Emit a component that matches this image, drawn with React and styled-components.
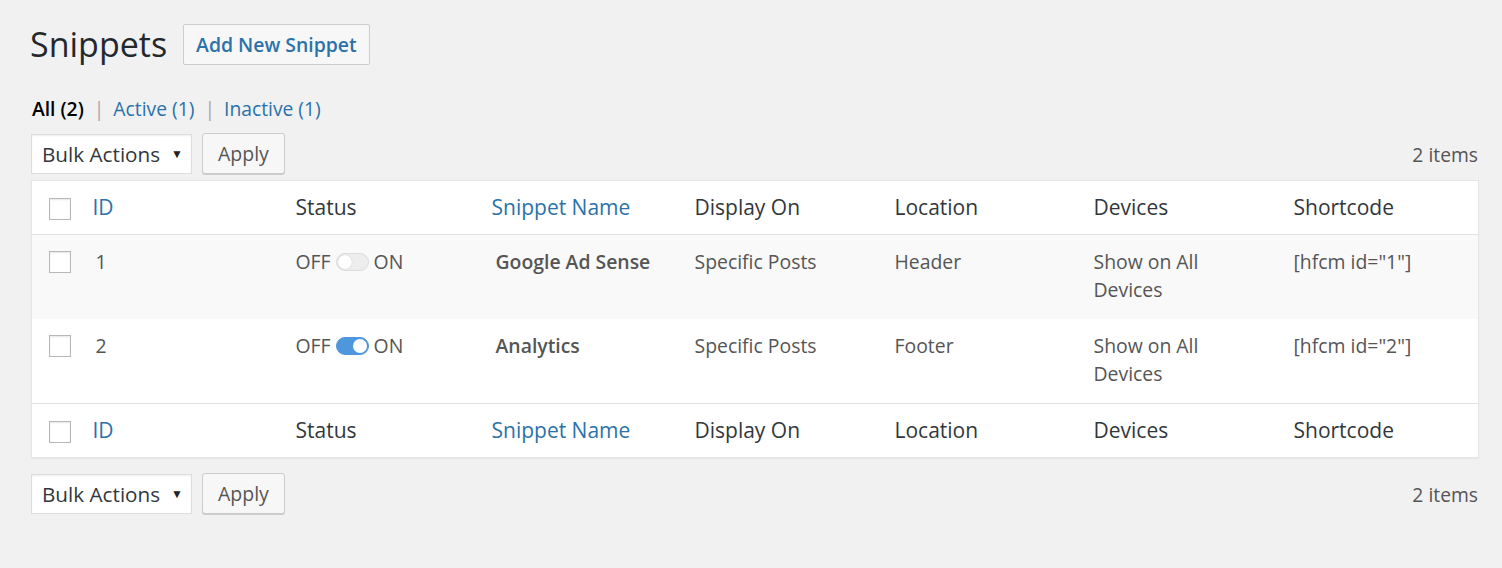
import React from 'react'
import styled, { createGlobalStyle } from 'styled-components'

const GlobalStyle = createGlobalStyle`
  html, body {
    margin: 0;
    padding: 0;
    background: #f1f1f1;
    font-family: "Open Sans", "Noto Sans", "Liberation Sans", sans-serif;
    color: #555;
  }
  * { box-sizing: border-box; }
`;

const snippets = [
  { id: 1, active: false, name: 'Google Ad Sense', display: 'Specific Posts', location: 'Header', devices: 'Show on All Devices', shortcode: '[hfcm id="1"]' },
  { id: 2, active: true, name: 'Analytics', display: 'Specific Posts', location: 'Footer', devices: 'Show on All Devices', shortcode: '[hfcm id="2"]' },
];

const columns = [
  { key: 'id', label: 'ID', link: true, width: 203 },
  { key: 'status', label: 'Status', width: 196 },
  { key: 'name', label: 'Snippet Name', link: true, width: 203 },
  { key: 'display', label: 'Display On', width: 200 },
  { key: 'location', label: 'Location', width: 199 },
  { key: 'devices', label: 'Devices', width: 200 },
  { key: 'shortcode', label: 'Shortcode', width: 199 },
];

const BulkBar = ({ top }) => (
  <TableNav top={top}>
    <SelectWrap>
      <Select defaultValue="-1">
        <option value="-1">Bulk Actions</option>
        <option value="delete">Delete</option>
      </Select>
      <Arrow>▼</Arrow>
    </SelectWrap>
    <Button>Apply</Button>
    <Count>2 items</Count>
  </TableNav>
);

const HeadRow = () => (
  <tr>
    <CheckHead>
      <Checkbox type="checkbox" />
    </CheckHead>
    {columns.map((c) => (
      <Th key={c.key}>{c.link ? <HeadLink href="#">{c.label}</HeadLink> : c.label}</Th>
    ))}
  </tr>
);

const App = () => {
  document.title = 'Snippets';
  return (
    <Wrap>
      <GlobalStyle />
      <TitleRow>
        <Title>Snippets</Title>
        <AddButton href="#">Add New Snippet</AddButton>
      </TitleRow>
      <Filters>
        <li><Current>All (2)</Current><Sep>|</Sep></li>
        <li><FilterLink href="#">Active (1)</FilterLink><Sep>|</Sep></li>
        <li><FilterLink href="#">Inactive (1)</FilterLink></li>
      </Filters>
      <BulkBar top />
      <Table>
        <colgroup>
          <col style={{ width: 47 }} />
          {columns.map((c) => (
            <col key={c.key} style={{ width: c.width }} />
          ))}
        </colgroup>
        <thead>
          <HeadRow />
        </thead>
        <tbody>
          {snippets.map((s, i) => (
            <Row key={s.id} alt={i % 2 === 0}>
              <CheckCell>
                <Checkbox type="checkbox" />
              </CheckCell>
              <Td><IdText>{s.id}</IdText></Td>
              <Td>
                <Toggle>
                  OFF
                  <Switch on={s.active}><Knob on={s.active} /></Switch>
                  ON
                </Toggle>
              </Td>
              <Td><Name>{s.name}</Name></Td>
              <Td>{s.display}</Td>
              <Td>{s.location}</Td>
              <Td>{s.devices}</Td>
              <Td>{s.shortcode}</Td>
            </Row>
          ))}
        </tbody>
        <Foot>
          <HeadRow />
        </Foot>
      </Table>
      <BulkBar />
    </Wrap>
  )
}

const Wrap = styled.div`
  padding: 24px 24px 40px 31px;
`;

const TitleRow = styled.div`
  display: flex;
  align-items: center;
  height: 41px;
`;

const Title = styled.h1`
  margin: 0 16px 0 -1px;
  font-size: 34px;
  font-weight: 400;
  line-height: 41px;
  color: #23282d;
`;

const AddButton = styled.a`
  display: inline-flex;
  align-items: center;
  height: 41px;
  padding: 0 12px;
  border: 1px solid #ccc;
  border-radius: 2px;
  background: #f7f7f7;
  color: #2b72aa;
  font-size: 19.4px;
  font-weight: 600;
  text-decoration: none;
`;

const Filters = styled.ul`
  display: flex;
  list-style: none;
  margin: 30px 0 0 1px;
  padding: 0;
  font-size: 19.3px;
  line-height: 28px;
  color: #666;
`;

const Current = styled.span`
  color: #000;
  font-weight: 600;
`;

const FilterLink = styled.a`
  color: #2b72aa;
  text-decoration: none;
`;

const Sep = styled.span`
  color: #a8a8a8;
  margin: 0 9px 0 10px;
`;

const TableNav = styled.div`
  display: flex;
  align-items: center;
  height: 42px;
  margin: ${(p) => (p.top ? '10px 0 5px 0' : '15px 0 0 0')};
`;

const SelectWrap = styled.div`
  position: relative;
  width: 161px;
  height: 40px;
  margin-right: 10px;
`;

const Select = styled.select`
  appearance: none;
  width: 100%;
  height: 100%;
  padding: 0 10px;
  border: 1px solid #ddd;
  border-radius: 0;
  background: #fff;
  box-shadow: inset 0 1px 2px rgba(0, 0, 0, 0.07);
  font-family: inherit;
  font-size: 20.7px;
  color: #32373c;
`;

const Arrow = styled.span`
  position: absolute;
  right: 9px;
  top: 11px;
  font-size: 12px;
  color: #222;
  pointer-events: none;
`;

const Button = styled.button`
  height: 41px;
  padding: 0 15px;
  border: 1px solid #ccc;
  border-radius: 3px;
  background: #f7f7f7;
  box-shadow: 0 1px 0 #ccc;
  font-family: inherit;
  font-size: 19.5px;
  color: #555;
  margin-bottom: 1px;
`;

const Count = styled.span`
  margin-left: auto;
  font-size: 19.3px;
  color: #555;
`;

const Table = styled.table`
  width: 100%;
  table-layout: fixed;
  border-collapse: collapse;
  background: #fff;
  border: 1px solid #e5e5e5;
  box-shadow: 0 1px 1px rgba(0, 0, 0, 0.04);
  thead tr { border-bottom: 1px solid #e1e1e1; }
`;

const Foot = styled.tfoot`
  tr { border-top: 1px solid #e1e1e1; }
`;

const Th = styled.th`
  text-align: left;
  font-weight: 400;
  font-size: 21px;
  line-height: 28px;
  color: #32373c;
  padding: 12px 14px 13px;
`;

const HeadLink = styled.a`
  color: #2b72aa;
  text-decoration: none;
`;

const CheckHead = styled.th`
  padding: 12px 0 9px 17px;
  text-align: left;
  vertical-align: middle;
`;

const CheckCell = styled.td`
  padding: 16px 0 0 17px;
  vertical-align: top;
`;

const Checkbox = styled.input`
  appearance: none;
  display: block;
  margin: 0;
  width: 22px;
  height: 22px;
  border: 1px solid #b4b9be;
  background: #fff;
  box-shadow: inset 0 1px 2px rgba(0, 0, 0, 0.1);
`;

const Row = styled.tr`
  background: ${(p) => (p.alt ? '#f9f9f9' : '#fff')};
`;

const Td = styled.td`
  vertical-align: top;
  padding: 13px 14px 15px;
  font-size: 19.4px;
  line-height: 28px;
  color: #555;
`;

const IdText = styled.span`
  padding-left: 3px;
`;

const Name = styled.strong`
  padding-left: 4px;
  font-weight: 600;
  color: #555;
`;

const Toggle = styled.span`
  display: inline-flex;
  align-items: center;
  gap: 5px;
`;

const Switch = styled.span`
  position: relative;
  display: inline-block;
  width: 33px;
  height: 18px;
  border-radius: 9px;
  background: ${(p) => (p.on ? '#4f97dc' : '#ededed')};
  border: 1px solid ${(p) => (p.on ? '#4f97dc' : '#dcdcdc')};
`;

const Knob = styled.span`
  position: absolute;
  top: 1px;
  left: ${(p) => (p.on ? '16px' : '1px')};
  width: 14px;
  height: 14px;
  border-radius: 50%;
  background: #fff;
  box-shadow: ${(p) => (p.on ? 'none' : '0 0 1px rgba(0,0,0,0.25)')};
`;

export default App
